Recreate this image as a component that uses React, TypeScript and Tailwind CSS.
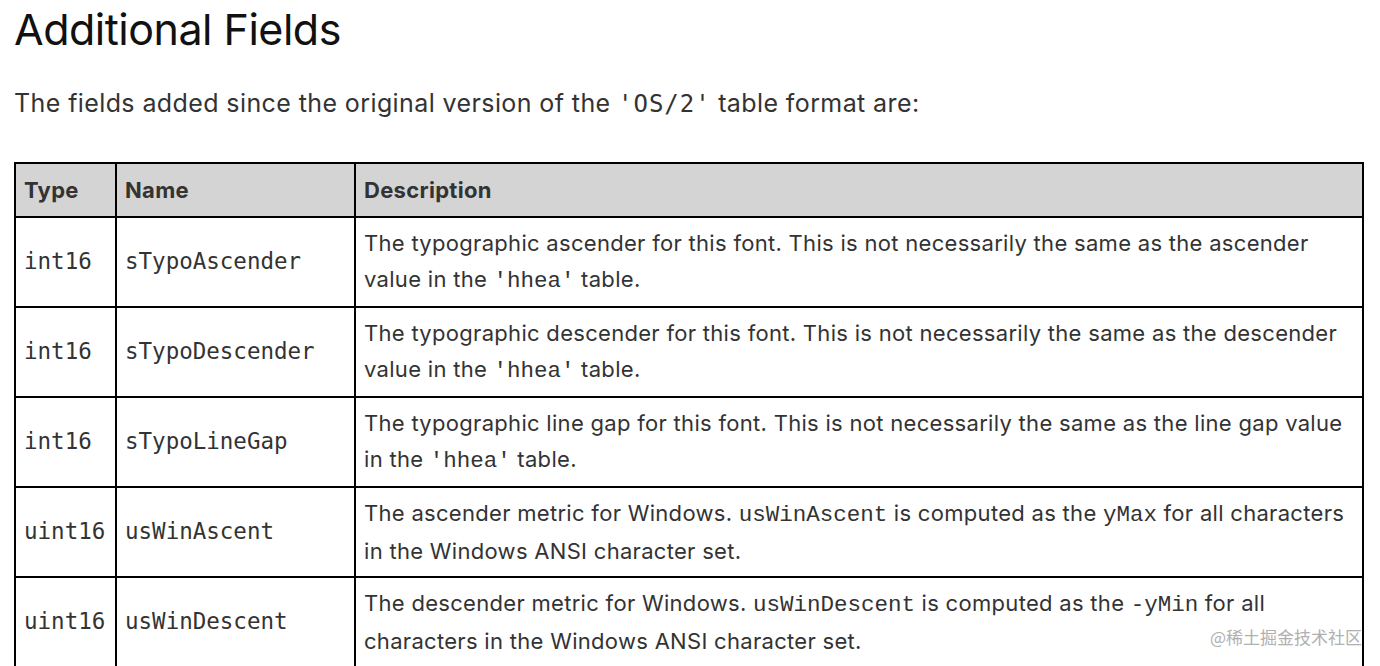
import React from 'react';

const sans = "font-['Inter','Noto_Sans',sans-serif]";
const mono = "[font-family:'DejaVu_Sans_Mono',monospace]";
const code = "[font-family:'Liberation_Mono',monospace] text-[22.5px] tracking-normal";

type Row = { type: string; name: string; desc: React.ReactNode };

const C = ({ children }: { children: React.ReactNode }) => <span className={code}>{children}</span>;

const rows: Row[] = [
    {
        type: 'int16',
        name: 'sTypoAscender',
        desc: (
            <>
                The typographic ascender for this font. This is not necessarily the same as the ascender value in the <C>'hhea'</C> table.
            </>
        ),
    },
    {
        type: 'int16',
        name: 'sTypoDescender',
        desc: (
            <>
                The typographic descender for this font. This is not necessarily the same as the descender value in the <C>'hhea'</C> table.
            </>
        ),
    },
    {
        type: 'int16',
        name: 'sTypoLineGap',
        desc: (
            <>
                The typographic line gap for this font. This is not necessarily the same as the line gap value in the <C>'hhea'</C> table.
            </>
        ),
    },
    {
        type: 'uint16',
        name: 'usWinAscent',
        desc: (
            <>
                The ascender metric for Windows. <C>usWinAscent</C> is computed as the <C>yMax</C> for all characters in the Windows ANSI character set.
            </>
        ),
    },
    {
        type: 'uint16',
        name: 'usWinDescent',
        desc: (
            <>
                The descender metric for Windows. <C>usWinDescent</C> is computed as the <C>-yMin</C> for all characters in the Windows ANSI character set.
            </>
        ),
    },
];

export default function App() {
    return (
        <div className={`relative h-[666px] overflow-hidden bg-white px-[14px] ${sans}`}>
            <h1 className="pt-[3px] text-[43px] leading-[52px] font-normal text-[#111] tracking-[-0.5px]">Additional Fields</h1>
            <p className="mt-[30px] text-[25px] leading-[36px] text-[#333] tracking-[0.4px]">
                The fields added since the original version of the{' '}
                <span className={`${mono} text-[24px] tracking-[1px]`}>'OS/2'</span> table format are:
            </p>
            <table className="mt-[40px] w-[1350px] table-fixed border-collapse border-2 border-black text-[#333]">
                <colgroup>
                    <col className="w-[101px]" />
                    <col className="w-[239px]" />
                    <col />
                </colgroup>
                <thead>
                    <tr className="bg-[#d4d4d4] h-[54px]">
                        <th className="border-2 border-black px-[8px] text-left text-[22px] font-bold tracking-[0.3px]">Type</th>
                        <th className="border-2 border-black px-[8px] text-left text-[22px] font-bold tracking-[0.3px]">Name</th>
                        <th className="border-2 border-black px-[8px] text-left text-[22px] font-bold tracking-[0.3px]">Description</th>
                    </tr>
                </thead>
                <tbody>
                    {rows.map((r) => (
                        <tr key={r.name} className="h-[88px]">
                            <td className={`border-2 border-black px-[8px] ${mono} text-[22.5px]`}>{r.type}</td>
                            <td className={`border-2 border-black px-[8px] ${mono} text-[22.5px]`}>{r.name}</td>
                            <td className="border-2 border-black px-[8px] py-[7px] text-[22px] leading-[36px] tracking-[0.3px]">{r.desc}</td>
                        </tr>
                    ))}
                </tbody>
            </table>
            <div className="absolute right-[18px] top-[624px] text-[17px] text-[#b0b0b0] font-['Noto_Sans_CJK_SC',sans-serif]">
                @稀土掘金技术社区
            </div>
        </div>
    );
}
